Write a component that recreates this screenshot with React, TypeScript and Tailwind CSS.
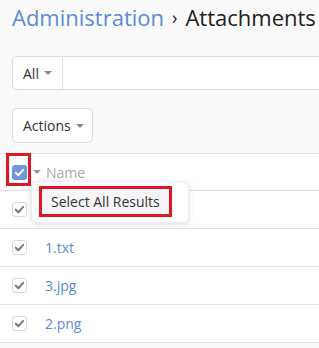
function Caret() {
  return <span className="ml-[5px] inline-block h-0 w-0 border-x-[4px] border-t-[4px] border-x-transparent border-t-[#888]" />
}

function RowCheck() {
  return (
    <span className="flex h-[15px] w-[15px] items-center justify-center rounded-[3px] border border-[#d9d9e6] bg-white">
      <svg viewBox="0 0 12 12" className="h-[11px] w-[11px]">
        <path d="M2 6.2 L4.8 9 L10 3.2" fill="none" stroke="#7a7a7a" strokeWidth="2.2" strokeLinecap="round" strokeLinejoin="round" />
      </svg>
    </span>
  )
}

const rows = ["", "1.txt", "3.jpg", "2.png"]

export default function App() {
  return (
    <div className="relative h-[348px] w-[319px] overflow-hidden bg-[#fafafa] font-['Open_Sans',sans-serif]">
      {/* Breadcrumb title */}
      <div className="flex h-[35px] items-center whitespace-nowrap pl-3 text-[22px] text-[#222]">
        <span className="text-[#5b8bd9]">Administration</span>
        <span className="mx-[8px] text-[18px]">›</span>
        <span>Attachments</span>
      </div>

      {/* Filter input */}
      <div className="ml-3 mt-[21px] flex h-[34px] w-[400px] rounded-l-[5px] border border-[#dcdce6] bg-white">
        <div className="flex items-center border-r border-[#dcdce6] px-[10px] text-[14px] text-[#333]">
          All
          <Caret />
        </div>
      </div>

      {/* Actions */}
      <div className="ml-3 mt-[18px] flex h-[35px] w-[81px] items-center rounded-[5px] border border-[#dcdce6] bg-white px-[10px] text-[14px] text-[#333]">
        Actions
        <Caret />
      </div>

      {/* Table */}
      <div className="mt-[10px] border-t border-[#e2e1ea] bg-white">
        <div className="flex h-[37px] items-center border-b border-[#e2e1ea] pl-3">
          <span className="flex h-[15px] w-[15px] items-center justify-center rounded-[3px] bg-[#6f96dc]">
            <svg viewBox="0 0 12 12" className="h-[11px] w-[11px]">
              <path d="M2 6.2 L4.8 9 L10 3.2" fill="none" stroke="#fff" strokeWidth="2.2" strokeLinecap="round" strokeLinejoin="round" />
            </svg>
          </span>
          <span className="ml-[6px] inline-block h-0 w-0 border-x-[4px] border-t-[4px] border-x-transparent border-t-[#999]" />
          <span className="ml-[5px] text-[14px] text-[#aaa]">Name</span>
        </div>
        {rows.map((name, i) => (
          <div key={i} className="flex h-[38px] items-center border-b border-[#e2e1ea] pl-3">
            <RowCheck />
            <span className="ml-[18px] text-[14px] text-[#5b8bd9]">{name}</span>
          </div>
        ))}
      </div>

      {/* Highlight around header checkbox */}
      <div className="absolute left-[6px] top-[153px] h-[33px] w-[25px] border-[3px] border-[#e01820]" />

      {/* Select all popup */}
      <div className="absolute left-[31px] top-[181px] h-[42px] w-[158px] rounded-[6px] border border-[#ececf2] bg-white shadow-[0_2px_6px_rgba(0,0,0,0.12)]">
        <div className="absolute left-[7px] top-[4px] flex h-[31px] w-[133px] items-center border-[3px] border-[#e01820] bg-[#f6f6f8] pl-[9px] text-[14px] text-[#333]">
          Select All Results
        </div>
      </div>
    </div>
  )
}
